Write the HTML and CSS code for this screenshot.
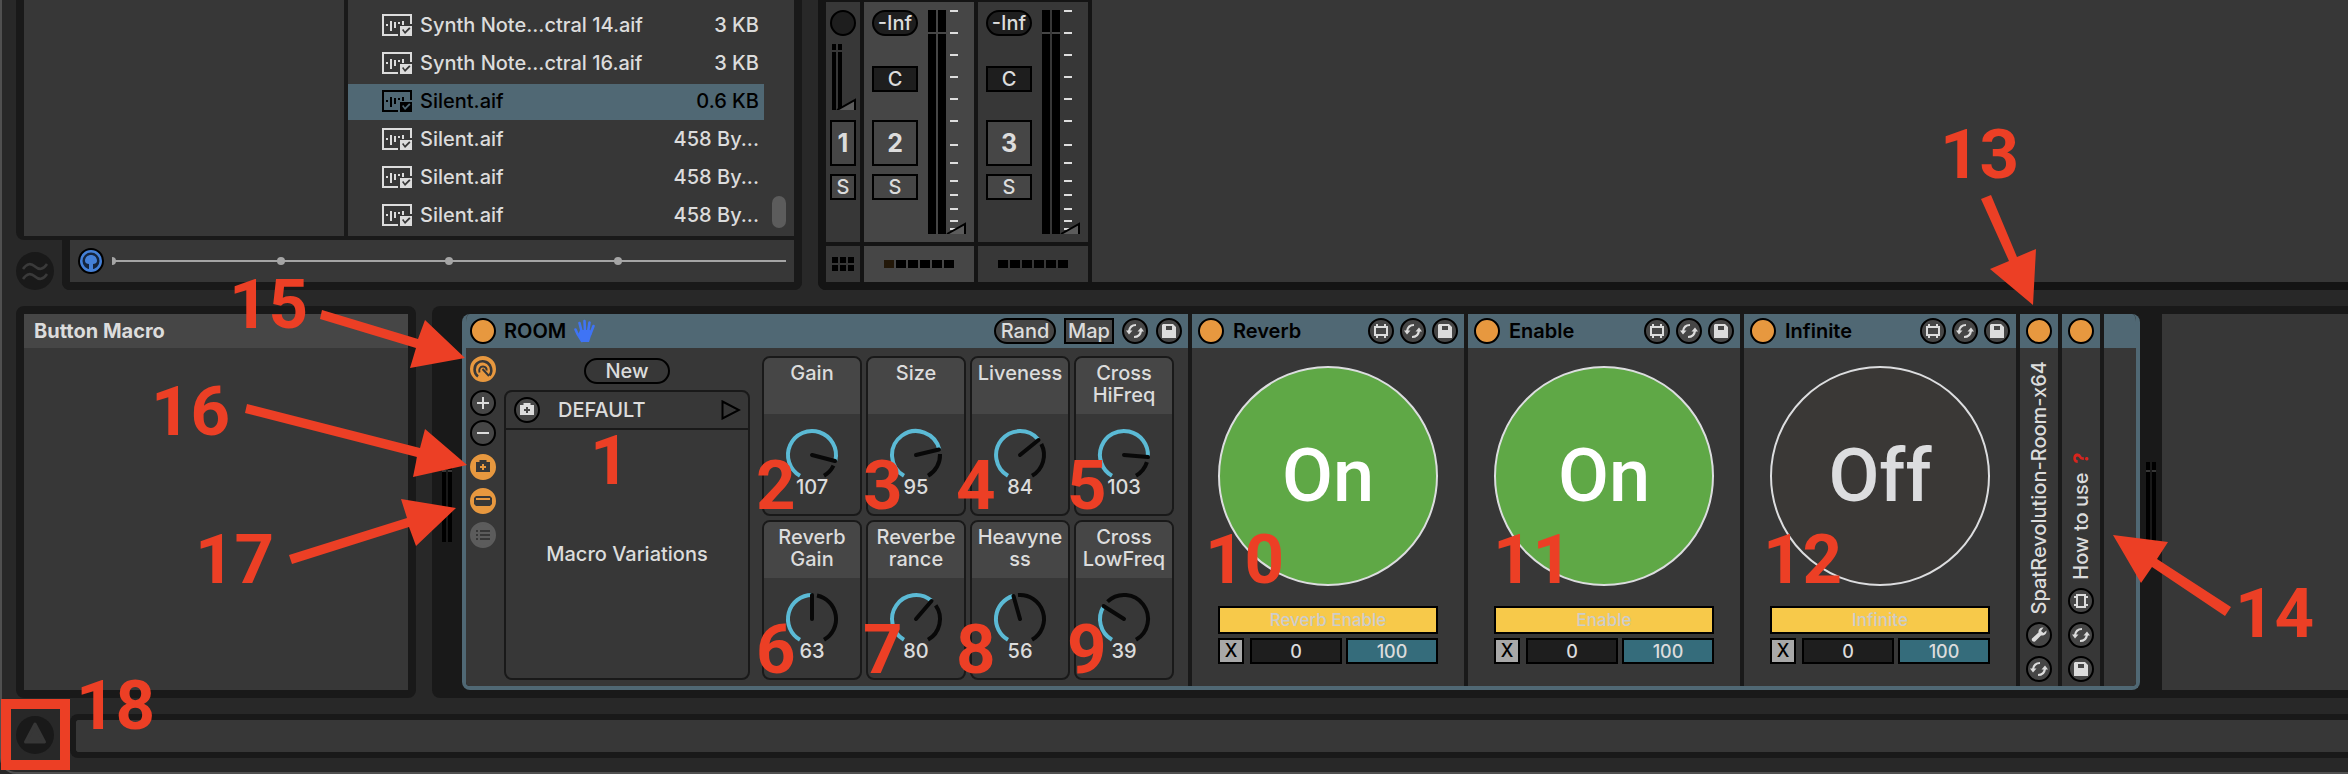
FILE: index.html
```
<!DOCTYPE html>
<html lang="en">
<head>
<meta charset="utf-8">
<title>ROOM rack</title>
<link rel="stylesheet" href="styles.css">
</head>
<body>
<svg class="defs" aria-hidden="true">
  <symbol id="swap" viewBox="0 0 26 26"><path d="M7 9H19V17H7ZM9 6V9M17 6V9M9 17V20M17 17V20" fill="none" stroke="currentColor" stroke-width="2"/></symbol>
  <symbol id="refresh" viewBox="0 0 26 26"><path d="M14 7C10 7 7.5 9.500 7 13.500M12 19C16 19 18.500 16.500 19 12.500" fill="none" stroke="currentColor" stroke-width="2.200"/><path d="M4 12.500H10.500L7 16.500ZM15.500 13.500H22L19 9.500Z" fill="currentColor"/></symbol>
  <symbol id="save" viewBox="0 0 26 26"><path d="M7 6H17L20 9V20H6V7ZM10 8V12H16V8Z" fill="currentColor" fill-rule="evenodd"/></symbol>
  <symbol id="camera" viewBox="0 0 26 26"><path d="M9.500 8V6H16.500V8H20V18H6V8ZM12 10V12H10V14H12V16H14V14H16V12H14V10Z" fill="currentColor" fill-rule="evenodd"/></symbol>
  <symbol id="wrench" viewBox="0 0 26 26"><path d="M20.500 8.500L17.500 11L15 9L17.500 5.500C14.500 5 12 7.500 12.500 10.500L6 16.500C5 18.500 7 20.500 9 19.500L15 13.500C18.500 14.200 21 11.500 20.500 8.500Z" fill="currentColor"/></symbol>
  <symbol id="dial" viewBox="0 0 26 26"><path d="M8 20.500C3.500 17.500 3.500 10 7.500 7C11.500 4 17.500 5 20 9.500C22 13.500 21.500 17 19.500 19.500" fill="none" stroke="currentColor" stroke-width="2.600"/><path d="M9.500 16.500C8.500 13.500 10 10.500 13 10.500C15.500 10.500 17 12.500 16.500 14.500M12.500 13L19 20" fill="none" stroke="currentColor" stroke-width="2"/></symbol>
  <symbol id="plus" viewBox="0 0 26 26"><path d="M7 13H19M13 7V19" stroke="currentColor" stroke-width="2"/></symbol>
  <symbol id="minus" viewBox="0 0 26 26"><path d="M7 13H19" stroke="currentColor" stroke-width="2"/></symbol>
  <symbol id="panel" viewBox="0 0 26 26"><path d="M6 8H20L22 10V16L20 18H6L4 16V10ZM6 10V12H20V10Z" fill="currentColor" fill-rule="evenodd"/></symbol>
  <symbol id="list" viewBox="0 0 26 26"><path d="M6 9H8M10 9H20M6 13H8M10 13H20M6 17H8M10 17H20" stroke="currentColor" stroke-width="2"/></symbol>
  <symbol id="audio" viewBox="0 0 30 22"><path d="M16 21H1V1H29V10" fill="none" stroke="currentColor" stroke-width="2"/><path d="M4 10h2v2H4zM8 7h2v10H8zM12 8h2v6h-2zM16 8h2v2h-2zM20 7h2v4h-2z" fill="currentColor"/><path d="M18 12H30V22H18ZM20 16L23 20L28.500 14.500L27.200 13.300L23 17.500L21.300 15Z" fill="currentColor" fill-rule="evenodd"/></symbol>
  <symbol id="fader" viewBox="0 0 20 12"><path d="M1 12L19 2V12" fill="#5c5c5c" stroke="#000" stroke-width="2"/></symbol>
  <symbol id="ticks" viewBox="0 0 8 224"><path d="M0 1H8M0 23H8M0 45H8M0 67H8M0 89H8M0 111H8M0 135H8M0 153H8M0 171H8M0 185H8M0 199H8M0 211H8M0 219H8" stroke="#ddd" stroke-width="2"/></symbol>
</svg>

<main class="app">
  <section class="upper">
    <div class="browser">
      <div class="browser-body">
        <div class="places"></div>
        <ul class="files">
          <li><svg><use href="#audio"/></svg><span>Synth Note...ctral 14.aif</span><span class="size">3 KB</span></li>
          <li><svg><use href="#audio"/></svg><span>Synth Note...ctral 16.aif</span><span class="size">3 KB</span></li>
          <li class="selected"><svg><use href="#audio"/></svg><span>Silent.aif</span><span class="size">0.6 KB</span></li>
          <li><svg><use href="#audio"/></svg><span>Silent.aif</span><span class="size">458 By...</span></li>
          <li><svg><use href="#audio"/></svg><span>Silent.aif</span><span class="size">458 By...</span></li>
          <li><svg><use href="#audio"/></svg><span>Silent.aif</span><span class="size">458 By...</span></li>
        </ul>
        <div class="scroll"><div class="thumb"></div></div>
      </div>
      <div class="browser-foot">
        <button class="round-dark" aria-label="Groove pool"><svg viewBox="0 0 38 38"><path d="M7 17C11 11 15 11 19 14.500S27 18 31 12M7 27C11 21 15 21 19 24.500S27 28 31 22" fill="none" stroke="#3a3a3a" stroke-width="2.500"/></svg></button>
        <div class="preview">
          <button class="preview-btn" aria-label="Preview"><svg viewBox="0 0 26 26"><circle cx="13" cy="13" r="12" fill="#4480d8" stroke="#000" stroke-width="2"/><circle cx="13" cy="13" r="8.500" fill="#14243d"/><path d="M7 13C7 9 10 7 13 7S19 9 19 13C19 15 17 16 15 16V22H11V16C9 16 7 15 7 13Z" fill="#4480d8"/></svg></button>
          <div class="scrub"><i></i><i></i><i></i><i></i></div>
        </div>
      </div>
    </div>

    <div class="mixer">
      <div class="track narrow">
        <div class="strip">
          <span class="knob-dot"></span>
          <div class="mini"><i></i><i></i><svg class="fader"><use href="#fader"/></svg></div>
          <button class="num">1</button>
          <button class="solo">S</button>
        </div>
        <div class="slots grid"><i></i><i></i><i></i><i></i><i></i><i></i></div>
      </div>
      <div class="track active">
        <div class="strip">
          <div class="controls"><button class="inf">-Inf</button><button class="pan">C</button><button class="num">2</button><button class="solo">S</button></div>
          <div class="meter"><i></i><i></i><svg class="ticks"><use href="#ticks"/></svg><svg class="fader"><use href="#fader"/></svg></div>
        </div>
        <div class="slots"><i class="lit"></i><i></i><i></i><i></i><i></i><i></i></div>
      </div>
      <div class="track">
        <div class="strip">
          <div class="controls"><button class="inf">-Inf</button><button class="pan">C</button><button class="num">3</button><button class="solo">S</button></div>
          <div class="meter"><i></i><i></i><svg class="ticks"><use href="#ticks"/></svg><svg class="fader"><use href="#fader"/></svg></div>
        </div>
        <div class="slots"><i></i><i></i><i></i><i></i><i></i><i></i></div>
      </div>
      <div class="mixer-rest"></div>
    </div>
  </section>

  <section class="lower">
    <aside class="info"><h2>Button Macro</h2><div class="info-body"></div></aside>
    <div class="chain">
      <div class="level"><i></i><i></i></div>
      <div class="rack">
        <article class="device room">
          <header><button class="power" aria-label="Device on"></button><h3>ROOM</h3>
            <svg class="hand" viewBox="0 0 22 24"><path d="M8 22L3.500 15L1.500 10.500M8 14L5.500 4M11 13L10.500 2M14 13L15.500 3.500M16 16L19.500 7" fill="none" stroke="#3f74f5" stroke-width="2.600" stroke-linecap="round"/><path d="M6 11L16 11L18 13L16 20L15 23H8L4 16Z" fill="#3f74f5"/></svg>
            <span class="spacer"></span>
            <button class="pill">Rand</button><button class="box">Map</button>
            <button class="ico" aria-label="Swap"><svg><use href="#refresh"/></svg></button><button class="ico" aria-label="Save"><svg><use href="#save"/></svg></button></header>
          <div class="room-body">
            <div class="tools">
              <button class="ico on" aria-label="Macros"><svg><use href="#dial"/></svg></button>
              <div class="pair"><button class="ico" aria-label="Add macro"><svg><use href="#plus"/></svg></button><button class="ico" aria-label="Remove macro"><svg><use href="#minus"/></svg></button></div>
              <button class="ico on" aria-label="Variations"><svg><use href="#camera"/></svg></button>
              <button class="ico on" aria-label="Devices"><svg><use href="#panel"/></svg></button>
              <button class="ico off" aria-label="Chains"><svg><use href="#list"/></svg></button>
            </div>
            <div class="variations">
              <button class="new">New</button>
              <div class="var-box">
                <div class="var-row"><button class="ico" aria-label="Store"><svg><use href="#camera"/></svg></button><span>DEFAULT</span><button class="play" aria-label="Launch"><svg viewBox="0 0 20 20"><path d="M1.500 1.500L18 10L1.500 18.500Z" fill="none" stroke="#000" stroke-width="2"/></svg></button></div>
                <div class="var-empty">Macro Variations</div>
              </div>
            </div>
            <div class="macros">
              <div class="macro"><h4>Gain</h4><svg viewBox="-28 -28 56 52"><path class="arc" d="M-12 20.800A24 24 0 1 1 23.400 5.300"/><path class="rest" d="M21.500 10.700A24 24 0 0 1 12 20.800"/><path class="pin" d="M0 0L23 6"/></svg><span>107</span></div>
              <div class="macro"><h4>Size</h4><svg viewBox="-28 -28 56 52"><path class="arc" d="M-12 20.800A24 24 0 1 1 23.400 -5.400"/><path class="rest" d="M24 -1A24 24 0 0 1 12 20.800"/><path class="pin" d="M0 0L23 -5.500"/></svg><span>95</span></div>
              <div class="macro"><h4>Liveness</h4><svg viewBox="-28 -28 56 52"><path class="arc" d="M-12 20.800A24 24 0 1 1 18.100 -15.800"/><path class="rest" d="M21.300 -11A24 24 0 0 1 12 20.800"/><path class="pin" d="M0 0L18.500 -15"/></svg><span>84</span></div>
              <div class="macro"><h4>Cross<br>HiFreq</h4><svg viewBox="-28 -28 56 52"><path class="arc" d="M-12 20.800A24 24 0 1 1 23.900 1.500"/><path class="rest" d="M22.900 7.200A24 24 0 0 1 12 20.800"/><path class="pin" d="M0 0L24 2"/></svg><span>103</span></div>
              <div class="macro"><h4>Reverb<br>Gain</h4><svg viewBox="-28 -28 56 52"><path class="arc" d="M-12 20.800A24 24 0 0 1 0 -24"/><path class="rest" d="M5 -23.500A24 24 0 0 1 12 20.800"/><path class="pin" d="M0 0V-24"/></svg><span>63</span></div>
              <div class="macro"><h4>Reverbe<br>rance</h4><svg viewBox="-28 -28 56 52"><path class="arc" d="M-12 20.800A24 24 0 1 1 15.400 -18.400"/><path class="rest" d="M19.700 -13.700A24 24 0 0 1 12 20.800"/><path class="pin" d="M0 0L15.500 -18"/></svg><span>80</span></div>
              <div class="macro"><h4>Heavyne<br>ss</h4><svg viewBox="-28 -28 56 52"><path class="arc" d="M-12 20.800A24 24 0 0 1 -7 -23"/><path class="rest" d="M-2 -23.900A24 24 0 0 1 12 20.800"/><path class="pin" d="M0 0L-6.500 -23"/></svg><span>56</span></div>
              <div class="macro"><h4>Cross<br>LowFreq</h4><svg viewBox="-28 -28 56 52"><path class="arc" d="M-12 20.800A24 24 0 0 1 -20.300 -12.800"/><path class="rest" d="M-16.500 -17.400A24 24 0 1 1 12 20.800"/><path class="pin" d="M0 0L-20.500 -13"/></svg><span>39</span></div>
            </div>
          </div>
        </article>

        <article class="device toggle">
          <header><button class="power" aria-label="Device on"></button><h3>Reverb</h3><span class="spacer"></span><button class="ico" aria-label="Unfold"><svg><use href="#swap"/></svg></button><button class="ico" aria-label="Swap"><svg><use href="#refresh"/></svg></button><button class="ico" aria-label="Save"><svg><use href="#save"/></svg></button></header>
          <div class="toggle-body"><button class="big is-on">On</button><button class="target">Reverb Enable</button>
            <div class="range"><button aria-label="Clear mapping">X</button><input value="0" aria-label="Minimum"><input class="max" value="100" aria-label="Maximum"></div></div>
        </article>
        <article class="device toggle">
          <header><button class="power" aria-label="Device on"></button><h3>Enable</h3><span class="spacer"></span><button class="ico" aria-label="Unfold"><svg><use href="#swap"/></svg></button><button class="ico" aria-label="Swap"><svg><use href="#refresh"/></svg></button><button class="ico" aria-label="Save"><svg><use href="#save"/></svg></button></header>
          <div class="toggle-body"><button class="big is-on">On</button><button class="target">Enable</button>
            <div class="range"><button aria-label="Clear mapping">X</button><input value="0" aria-label="Minimum"><input class="max" value="100" aria-label="Maximum"></div></div>
        </article>
        <article class="device toggle">
          <header><button class="power" aria-label="Device on"></button><h3>Infinite</h3><span class="spacer"></span><button class="ico" aria-label="Unfold"><svg><use href="#swap"/></svg></button><button class="ico" aria-label="Swap"><svg><use href="#refresh"/></svg></button><button class="ico" aria-label="Save"><svg><use href="#save"/></svg></button></header>
          <div class="toggle-body"><button class="big">Off</button><button class="target">Infinite</button>
            <div class="range"><button aria-label="Clear mapping">X</button><input value="0" aria-label="Minimum"><input class="max" value="100" aria-label="Maximum"></div></div>
        </article>
        <article class="device folded">
          <header><button class="power" aria-label="Device on"></button></header>
          <div class="folded-body"><h3>SpatRevolution-Room-x64</h3><button class="ico" aria-label="Edit"><svg><use href="#wrench"/></svg></button><button class="ico" aria-label="Swap"><svg><use href="#refresh"/></svg></button></div>
        </article>
        <article class="device folded">
          <header><button class="power" aria-label="Device on"></button></header>
          <div class="folded-body"><h3>How to use <b>?</b></h3><button class="ico" aria-label="Unfold"><svg class="turn"><use href="#swap"/></svg></button><button class="ico" aria-label="Swap"><svg><use href="#refresh"/></svg></button><button class="ico" aria-label="Save"><svg><use href="#save"/></svg></button></div>
        </article>
        <article class="device tail"><header></header></article>
      </div>
      <div class="level"><i></i><i></i></div>
      <div class="drop"></div>
    </div>
  </section>

  <footer class="status">
    <button class="round-dark" aria-label="Show detail"><svg viewBox="0 0 38 38"><path d="M19 8L28.500 26H9.500Z" fill="#373737" stroke="#373737" stroke-width="3" stroke-linejoin="round"/></svg></button>
    <div class="status-bar"></div>
  </footer>
</main>

<svg class="notes">
  <g class="arrows">
    <path d="M322 310L418 339L425 320L465 358L410 368L416 348L320 319Z"/>
    <path d="M247 404L420 448L425 429L467 465L413 477L417 457L245 413Z"/>
    <path d="M289 555L407 518L401 499L456 508L416 546L409 527L292 564Z"/>
    <path d="M1981 199L1991 195L2017 257L2036 249L2033 305L1990 269L2009 261Z"/>
    <path d="M2113 535L2168 542L2157 559L2231 607L2225 616L2152 567L2141 583Z"/>
  </g>
  <rect x="6" y="704" width="59" height="61"/>
  <g class="marks">
    <text x="590" y="484">1</text>
    <text x="756" y="509">2</text><text x="863" y="509">3</text><text x="956" y="509">4</text><text x="1067" y="509">5</text>
    <text x="756" y="673">6</text><text x="863" y="673">7</text><text x="956" y="673">8</text><text x="1067" y="673">9</text>
    <text x="1205" y="583">10</text><text x="1493" y="583">11</text><text x="1763" y="583">12</text>
    <text x="1940" y="178">13</text><text x="2235" y="637">14</text>
    <text x="229" y="328">15</text><text x="151" y="435">16</text><text x="195" y="583">17</text><text x="76" y="729">18</text>
  </g>
</svg>
</body>
</html>
```
FILE: styles.css
```
* { box-sizing: border-box; }
body { margin: 0; background: #282828; color: #dcdcdc; font: 500 20px/22px Inter, "Liberation Sans", sans-serif; position: relative; overflow: hidden; }
button, input { font: inherit; color: inherit; margin: 0; padding: 0; border: 0; background: none; min-width: 0; }
h2, h3, h4, ul { margin: 0; padding: 0; font-size: inherit; font-weight: inherit; list-style: none; }
svg { display: block; }
i { display: block; background: #000; }
.defs { width: 0; height: 0; position: absolute; }
.spacer { flex: 1; }

.app { min-height: 100vh; display: flex; flex-direction: column; gap: 16px; border-left: 2px solid #505050; border-bottom: 2px solid #505050; border-bottom-left-radius: 16px; padding: 0 0 14px 14px; }
.upper { display: flex; gap: 16px; height: 290px; }

.browser { width: 786px; flex: none; display: flex; flex-direction: column; }
.browser-body { flex: 1; display: flex; border: solid #191919; border-width: 0 8px 4px; border-bottom-left-radius: 8px; background: #373737; }
.places { width: 324px; border-right: 4px solid #191919; }
.files { flex: 1; padding-top: 8px; display: flex; flex-direction: column; gap: 2px; }
.files li { height: 36px; display: flex; align-items: center; gap: 8px; padding: 0 5px 2px 34px; }
.files svg { width: 30px; height: 22px; }
.files .size { margin-left: auto; }
.files .selected { background: #506874; color: #000; }
.scroll { width: 30px; display: flex; align-items: flex-end; padding: 0 8px 8px; }
.thumb { width: 14px; height: 32px; border-radius: 7px; background: #5c5c5c; }
.browser-foot { display: flex; justify-content: space-between; }
.round-dark { width: 38px; height: 38px; border-radius: 50%; background: #191919; margin-top: 12px; }
.preview { flex: none; width: 740px; height: 50px; border: 8px solid #191919; border-top: 0; border-radius: 0 0 8px 8px; background: #373737; display: flex; align-items: center; gap: 8px; padding: 0 8px; }
.preview-btn svg { width: 26px; height: 26px; }
.scrub { flex: 1; display: flex; overflow: hidden; background: linear-gradient(#a5a5a5, #a5a5a5) center / 100% 2px no-repeat; }
.scrub i { flex: 1; height: 8px; background: none; }
.scrub i::before { content: ""; display: block; width: 8px; height: 8px; margin-left: -4px; border-radius: 50%; background: #a5a5a5; }

.mixer { flex: 1; display: flex; gap: 4px; background: #141414; border-left: 8px solid #141414; border-bottom: 8px solid #141414; border-bottom-left-radius: 8px; }
.track { width: 110px; display: flex; flex-direction: column; gap: 4px; padding-top: 2px; }
.track.narrow { width: 34px; }
.strip { flex: 1; background: #373737; display: flex; padding: 8px; gap: 10px; }
.active .strip, .active .slots { background: #464646; }
.controls { display: flex; flex-direction: column; width: 46px; }
.strip button { border: 2px solid #000; background: #464646; height: 26px; line-height: 22px; }
.strip .num { height: 46px; font-size: 25px; font-weight: 700; }
.strip .solo { margin-top: 8px; }
.strip .inf { border-radius: 13px; background: #1e1e1e; }
.strip .pan { margin: 30px 0 28px; background: #1e1e1e; }
.meter { display: flex; gap: 2px; position: relative; }
.meter i { width: 8px; height: 224px; background: linear-gradient(#000 22px, #464646 22px, #464646 24px, #000 24px); }
.ticks { width: 8px; height: 224px; margin-left: 2px; }
.fader { position: absolute; width: 20px; height: 12px; left: 18px; bottom: 0; }
.slots { height: 36px; background: #373737; display: flex; gap: 2px; align-items: center; justify-content: center; }
.slots i { width: 10px; height: 8px; }
.slots .lit { background: #221708; }
.slots.grid { display: grid; grid-template-columns: repeat(3, 6px); grid-auto-rows: 6px; align-content: center; }
.slots.grid i { width: 6px; height: 6px; }
.narrow .strip { flex-direction: column; gap: 0; padding: 8px 4px; }
.knob-dot { width: 26px; height: 26px; border: 2px solid #000; border-radius: 50%; background: #1e1e1e; }
.mini { display: flex; gap: 2px; margin: 8px 2px 10px; position: relative; }
.mini i { width: 4px; height: 66px; background: linear-gradient(#000 6px, #373737 6px, #373737 8px, #000 8px); }
.mini .fader { left: 4px; }
.mixer-rest { flex: 1; background: #373737; }

.lower { display: flex; gap: 16px; height: 392px; }
.info { width: 400px; flex: none; border: 8px solid #191919; border-radius: 8px; background: #373737; }
.info h2 { background: #464646; height: 34px; padding: 0 10px; line-height: 34px; font-weight: 700; }
.chain { flex: 1; background: #191919; border-radius: 8px 0 0 8px; padding: 8px 0 8px 10px; display: flex; }
.level { display: flex; gap: 2px; padding: 0 10px 0 0; align-items: flex-start; }
.level i { width: 4px; height: 80px; margin-top: 148px; background: linear-gradient(#000 8px, #373737 8px, #373737 10px, #000 10px); }
.rack + .level { padding: 0 6px; }
.drop { flex: 1; background: #373737; }

.rack { display: flex; gap: 4px; border-radius: 8px; overflow: hidden; border: solid #506874; border-width: 0 4px 4px; background: #191919; }
.device { background: #373737; display: flex; flex-direction: column; }
.device header { height: 34px; flex: none; background: #506874; display: flex; align-items: center; gap: 6px; padding: 0 6px; color: #000; }
.device header h3 { margin-left: 3px; font-weight: 600; }
.power { width: 26px; height: 26px; border: 2px solid #000; border-radius: 50%; background: #e7983f; }
.ico { width: 26px; height: 26px; flex: none; border: 2px solid #000; border-radius: 50%; background: #464646; color: #dcdcdc; }
.ico svg { width: 26px; height: 26px; margin: -2px; }
.ico .turn { transform: rotate(90deg); }
.ico.on { background: #e7983f; border-color: #e7983f; color: #373737; }
.ico.off { background: #5c5c5c; border-color: #5c5c5c; color: #373737; }
.room { width: 722px; }
.room header { gap: 8px; padding-left: 4px; }
.room header h3 { margin-left: 0; }
.hand { width: 22px; height: 24px; }
.pill, .box { height: 26px; border: 2px solid #000; background: #464646; color: #dcdcdc; line-height: 22px; }
.pill { border-radius: 13px; width: 62px; }
.box { width: 50px; }
.room-body { flex: 1; display: flex; padding: 8px 14px 6px 4px; }
.tools { width: 34px; display: flex; flex-direction: column; gap: 8px; }
.pair { display: flex; flex-direction: column; gap: 4px; }
.variations { width: 246px; display: flex; flex-direction: column; align-items: center; gap: 6px; padding-top: 2px; margin-right: 12px; }
.new { width: 86px; height: 26px; border: 2px solid #000; border-radius: 13px; line-height: 22px; }
.var-box { flex: 1; align-self: stretch; border: 2px solid #191919; border-radius: 8px; display: flex; flex-direction: column; }
.var-row { height: 38px; border-bottom: 2px solid #191919; display: flex; align-items: center; padding: 0 7px 0 8px; }
.var-row span { flex: 1; margin-left: 18px; }
.play svg { width: 20px; height: 20px; }
.var-empty { flex: 1; display: flex; align-items: center; justify-content: center; }
.macros { flex: 1; display: grid; grid-template-columns: repeat(4, 1fr); grid-template-rows: 1fr 1fr; gap: 4px; }
.macro { border: 2px solid #191919; border-radius: 8px; overflow: hidden; display: flex; flex-direction: column; align-items: center; }
.macro h4 { align-self: stretch; height: 56px; background: #464646; text-align: center; padding: 4px 0; }
.macro svg { width: 56px; height: 52px; margin-top: 13px; fill: none; stroke-width: 4; }
.macro span { line-height: 16px; }
.arc { stroke: #5bbad5; }
.rest { stroke: #080808; }
.pin { stroke: #080808; stroke-linecap: round; }
.toggle { width: 272px; }
.toggle-body { padding: 18px 26px 0; display: flex; flex-direction: column; }
.big { width: 220px; height: 220px; border: 2px solid #dcdddf; border-radius: 50%; background: #3a3836; color: #dcdddf; font: 500 74px/80px Roboto, sans-serif; }
.big.is-on { background: #5fa846; color: #fff; }
.target { height: 28px; margin: 20px 0 4px; border: 2px solid #000; background: #f7c94a; color: #ccc; font-size: 17px; }
.range { display: flex; }
.range button, .range input { border: 2px solid #000; height: 26px; text-align: center; font-size: 18px; line-height: 22px; }
.range button { width: 26px; margin-right: 6px; background: #a8a8a8; color: #000; }
.range input { flex: 1; width: 0; background: #1e1e1e; }
.range .max { margin-left: 4px; background: #356c7b; }
.folded { width: 38px; }
.folded-body { flex: 1; display: flex; flex-direction: column; align-items: center; justify-content: flex-end; gap: 8px; padding-bottom: 4px; }
.folded h3 { writing-mode: vertical-rl; transform: rotate(180deg); white-space: pre; }
.folded b { color: #d8241c; margin-top: 4px; }
.tail { width: 32px; }

.status { display: flex; gap: 16px; height: 44px; }
.status .round-dark { margin-top: 2px; }
.status-bar { flex: 1; border: solid #191919; border-width: 6px 0 6px 6px; border-radius: 8px 0 0 8px; background: #373737; }

.notes { position: absolute; left: 0; top: 0; width: 100%; height: 100%; pointer-events: none; }
.arrows, .marks { fill: #ec3f25; }
.marks { font: 700 69px Roboto, "Liberation Sans", sans-serif; }
.notes rect { fill: none; stroke: #ec3f25; stroke-width: 10; }
```
